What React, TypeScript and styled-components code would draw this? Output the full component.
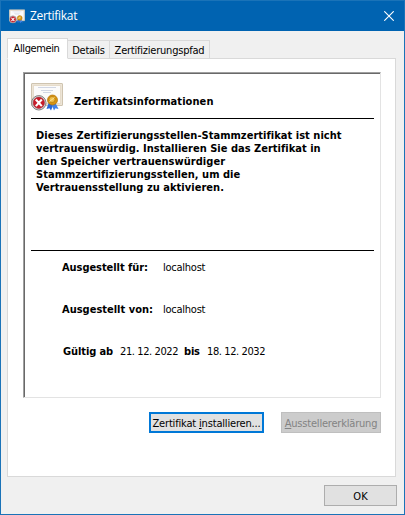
import React from 'react';
import styled, { createGlobalStyle } from 'styled-components';

const GlobalStyle = createGlobalStyle`
  *, *::before, *::after { box-sizing: border-box; }
  body { margin: 0; background: #f0f0f0; }
`;

const Dialog = styled.main`
  display: flex;
  flex-direction: column;
  width: 405px;
  height: 515px;
  border: 1px solid #1a73b8;
  background: #f0f0f0;
  color: #000;
  font: 11px/13px 'DejaVu Sans Condensed', 'DejaVu Sans', Tahoma, sans-serif;
  font-stretch: condensed;
  overflow: hidden;
`;

const TitleBar = styled.header`
  display: flex;
  align-items: center;
  flex: none;
  height: 30px;
  padding: 0 10px 0 8px;
  background: #0063b1;
  color: #fff;
`;

const Title = styled.h1`
  flex: 1;
  margin: 0 0 0 5px;
  font: 400 12px/16px 'Open Sans', 'Noto Sans', sans-serif;
`;

const CloseButton = styled.button`
  display: flex;
  margin: 0;
  padding: 0;
  border: 0;
  background: none;
  color: #fff;
`;

const Tabs = styled.nav`
  display: flex;
  align-items: flex-end;
  flex: none;
  height: 28px;
  margin-bottom: -1px;
  padding: 0 6px;
  z-index: 1;
`;

const Tab = styled.button<{ $width: number; $active?: boolean }>`
  flex: none;
  width: ${p => p.$width}px;
  height: ${p => (p.$active ? 21 : 19)}px;
  margin: 0;
  padding: ${p => (p.$active ? '0 2px 1px 0' : '1px 0 0')};
  border: 1px solid #d9d9d9;
  border-left-width: ${p => (p.$active ? 1 : 0)}px;
  border-bottom-color: ${p => (p.$active ? '#fff' : '#d9d9d9')};
  background: ${p => (p.$active ? '#fff' : '#f0f0f0')};
  color: #000;
  font: inherit;
  white-space: nowrap;
`;

const Page = styled.section`
  flex: none;
  width: 389px;
  height: 419px;
  margin-left: 6px;
  padding: 13px 14px 0 15px;
  border: 1px solid #d9d9d9;
  background: #fff;
`;

const Sunken = styled.div`
  width: 358px;
  height: 326px;
  border: 1px solid #a0a0a0;
  border-right-color: #e3e3e3;
  border-bottom-color: #e3e3e3;
`;

const Certificate = styled.article`
  height: 324px;
  padding: 0 6px;
  border-top: 1px solid #696969;
  border-left: 1px solid #696969;
`;

const Heading = styled.div`
  display: flex;
  height: 45px;
  padding-top: 9px;
  border-bottom: 1px solid #000;
`;

const HeadingText = styled.h2`
  margin: 12px 0 0 11px;
  font: inherit;
  font-weight: 700;
`;

const Notice = styled.div`
  height: 132px;
  padding: 10px 0 0 5px;
  border-bottom: 1px solid #000;
  font-weight: 700;
  white-space: nowrap;
`;

const Fit = styled.span<{ $spacing: number }>`
  letter-spacing: ${p => p.$spacing}px;
  white-space: pre;
`;

const NoticeLine = styled(Fit)`
  display: block;
`;

const Details = styled.dl`
  display: grid;
  grid-auto-rows: 42px;
  margin: 0;
  padding: 10px 0 0 31px;
`;

const Row = styled.div`
  display: flex;
`;

const Label = styled.dt<{ $width: number; $inset?: number }>`
  width: ${p => p.$width}px;
  padding-left: ${p => p.$inset ?? 0}px;
  font-weight: 700;
  white-space: nowrap;
`;

const Value = styled.dd<{ $width?: number }>`
  width: ${p => (p.$width ? p.$width + 'px' : 'auto')};
  margin: 0;
  white-space: nowrap;
`;

const Actions = styled.div`
  display: flex;
  justify-content: flex-end;
  gap: 17px;
  margin-top: 14px;
`;

const Button = styled.button<{ $width: number; $primary?: boolean }>`
  flex: none;
  width: ${p => p.$width}px;
  height: 21px;
  margin: 0;
  padding: 1px 0 0;
  border: ${p => (p.$primary ? '2px solid #0078d7' : '1px solid #adadad')};
  background: #e1e1e1;
  color: #000;
  font: inherit;
  white-space: nowrap;
  &:disabled {
    border-color: #bfbfbf;
    background: #ccc;
    color: #838383;
  }
`;

const Footer = styled.footer`
  display: flex;
  justify-content: flex-end;
  padding: 8px 7px 0 0;
`;

function CertificateIcon({ width, height }: { width: number; height: number }) {
  return (
    <svg width={width} height={height} viewBox="0 0 32 28" aria-hidden="true">
      <rect x=".5" y=".5" width="31" height="22" rx=".5" fill="#e6dccb" stroke="#cfc4b0" />
      <rect x="1.500" y="1.500" width="29" height="20" fill="none" stroke="#f5eee2" strokeDasharray="1 1" />
      <rect x="3" y="3" width="26" height="17" fill="#fbfbfb" />
      <path d="M7 4.500h18M10 7.500h12M12 9.500h8" stroke="#c6cddd" strokeWidth=".8" />
      <path d="m18 19-2.500 7 3-.8 1.500 2.300 2.500-6z" fill="#2868d8" />
      <path d="m24 19 3.500 7-3-.8-1.500 2.300-2.500-6z" fill="#3f82ea" />
      <circle cx="21.500" cy="17" r="5" fill="#d79512" stroke="#b47308" strokeWidth=".7" />
      <circle cx="21" cy="16.500" r="3" fill="#f0bf4a" stroke="#a96f0b" strokeWidth=".6" />
      <path d="m18.500 18.500 5-4" stroke="#fbe49a" />
      <circle cx="7.800" cy="19.800" r="7.200" fill="#dcdcdc" stroke="#808080" />
      <circle cx="7.800" cy="19.800" r="5.700" fill="#c81d2a" stroke="#95303a" strokeWidth=".5" />
      <path d="m4.800 16.500 6 6.600m0-6.600-6 6.600" stroke="#fff" strokeWidth="2.100" />
    </svg>
  );
}

export default function App() {
  return (
    <>
      <GlobalStyle />
      <Dialog>
        <TitleBar>
          <CertificateIcon width={16} height={15} />
          <Title><Fit $spacing={-0.3}>Zertifikat</Fit></Title>
          <CloseButton aria-label="Schließen">
            <svg width="10" height="10" viewBox="0 0 10 10">
              <path d="m.3.3 9.400 9.400m0-9.400L.3 9.700" stroke="currentColor" strokeWidth="1.100" />
            </svg>
          </CloseButton>
        </TitleBar>
        <Tabs>
          <Tab $width={61} $active><Fit $spacing={-0.4}>Allgemein</Fit></Tab>
          <Tab $width={42}><Fit $spacing={-0.25}>Details</Fit></Tab>
          <Tab $width={100}><Fit $spacing={-0.22}>Zertifizierungspfad</Fit></Tab>
        </Tabs>
        <Page>
          <Sunken>
            <Certificate>
              <Heading>
                <CertificateIcon width={32} height={28} />
                <HeadingText><Fit $spacing={0.08}>Zertifikatsinformationen</Fit></HeadingText>
              </Heading>
              <Notice>
                <NoticeLine $spacing={0.03}>Dieses Zertifizierungsstellen-Stammzertifikat ist nicht</NoticeLine>
                <NoticeLine $spacing={0.01}>vertrauenswürdig. Installieren Sie das Zertifikat in</NoticeLine>
                <NoticeLine $spacing={0.04}>den Speicher vertrauenswürdiger</NoticeLine>
                <NoticeLine $spacing={0.03}>Stammzertifizierungsstellen, um die</NoticeLine>
                <NoticeLine $spacing={0.03}>Vertrauensstellung zu aktivieren.</NoticeLine>
              </Notice>
              <Details>
                <Row>
                  <Label $width={101}><Fit $spacing={-0.06}>Ausgestellt für:</Fit></Label>
                  <Value><Fit $spacing={-0.25}>localhost</Fit></Value>
                </Row>
                <Row>
                  <Label $width={101}><Fit $spacing={0}>Ausgestellt von:</Fit></Label>
                  <Value><Fit $spacing={-0.25}>localhost</Fit></Value>
                </Row>
                <Row>
                  <Label $width={58} $inset={1}><Fit $spacing={-0.1}>Gültig ab</Fit></Label>
                  <Value $width={64}><Fit $spacing={-0.4}>21. 12. 2022</Fit></Value>
                  <Label $width={23}><Fit $spacing={-0.2}>bis</Fit></Label>
                  <Value><Fit $spacing={-0.4}>18. 12. 2032</Fit></Value>
                </Row>
              </Details>
            </Certificate>
          </Sunken>
          <Actions>
            <Button $width={115} $primary><Fit $spacing={-0.17}>Zertifikat <u>i</u>nstallieren...</Fit></Button>
            <Button $width={100} disabled><Fit $spacing={-0.2}><u>A</u>usstellererklärung</Fit></Button>
          </Actions>
        </Page>
        <Footer>
          <Button $width={73}><Fit $spacing={0}>OK</Fit></Button>
        </Footer>
      </Dialog>
    </>
  );
}
